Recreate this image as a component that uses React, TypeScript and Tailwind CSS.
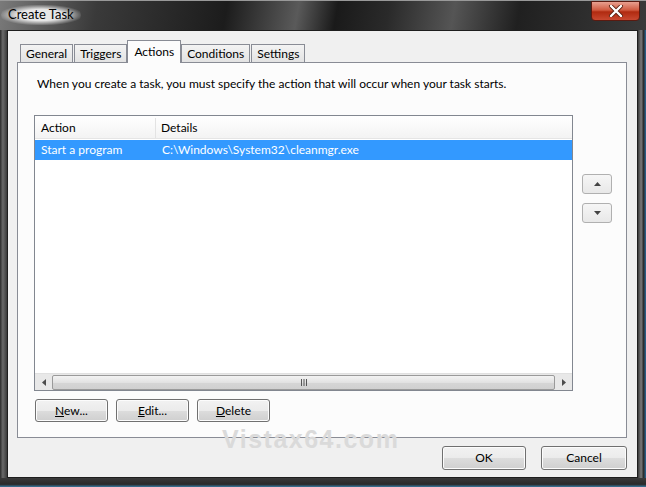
import React from "react";

const Btn = ({ children, className = "" }: { children: React.ReactNode; className?: string }) => (
  <div
    className={`flex items-center justify-center rounded-[3px] border border-[#707070] bg-[linear-gradient(#f2f2f2_0%,#ebebeb_50%,#dddddd_50%,#cfcfcf_100%)] text-[12px] text-black shadow-[inset_0_0_0_1px_#fcfcfc] ${className}`}
  >
    {children}
  </div>
);

export default function App() {
  return (
    <div
      className="w-[646px] h-[487px] overflow-hidden flex flex-col bg-[#1a1a1a]"
      style={{ fontFamily: 'Lato, "Noto Sans", sans-serif' }}
    >
      {/* title bar */}
      <div className="relative h-[30px] shrink-0 bg-[linear-gradient(100deg,#7a7a7a_0%,#3a3a3a_15%,#1c1c1c_35%,#5a5a5a_46%,#1a1a1a_52%,#2a2a2a_60%,#555_70%,#202020_80%,#3a3a3a_100%)] border-t border-[#999]">
        <div className="absolute left-[1px] top-[4px] px-[7px] h-[20px] flex items-center rounded-[10px] bg-[radial-gradient(ellipse_at_center,rgba(255,255,255,0.85)_40%,rgba(255,255,255,0)_75%)] text-[13px] text-black">
          Create Task
        </div>
        <div className="absolute left-[591px] top-[0px] w-[49px] h-[20px] rounded-b-[4px] border border-[#5a1a10] bg-[linear-gradient(#e8a090_0%,#d05a40_45%,#b02a10_55%,#c84830_100%)] flex items-center justify-center">
          <svg width="16" height="12" viewBox="0 0 16 12">
            <path d="M3 1 L13 11 M13 1 L3 11" stroke="#5a2010" strokeWidth="4" strokeLinecap="round" />
            <path d="M3 1 L13 11 M13 1 L3 11" stroke="#ffffff" strokeWidth="2.4" strokeLinecap="round" />
          </svg>
        </div>
      </div>

      <div className="flex flex-1 min-h-0">
        <div className="w-[7px] shrink-0 bg-[linear-gradient(90deg,#2a2a2a,#6a6a6a_40%,#3a3a3a)]" />
        {/* client */}
        <div className="flex-1 flex flex-col bg-[#f0f0f0] border border-[#1e1e1e] px-[9px] pt-[8px]">
          {/* tabs */}
          <div className="flex items-end h-[23px] pl-[3px] text-[12px] text-black">
            <div className="h-[18px] px-[5px] flex items-center border border-[#898c95] border-b-0 bg-[linear-gradient(#f3f3f3,#e3e3e3)]">General</div>
            <div className="h-[18px] px-[5px] ml-[1px] flex items-center border border-[#898c95] border-b-0 bg-[linear-gradient(#f3f3f3,#e3e3e3)]">Triggers</div>
            <div className="relative z-10 h-[23px] px-[6px] mb-[-1px] flex items-start pt-[2px] border border-[#898c95] border-b-0 bg-[#fcfcfc]">Actions</div>
            <div className="h-[18px] px-[5px] flex items-center border border-[#898c95] border-b-0 bg-[linear-gradient(#f3f3f3,#e3e3e3)]">Conditions</div>
            <div className="h-[18px] px-[5px] ml-[1px] flex items-center border border-[#898c95] border-b-0 bg-[linear-gradient(#f3f3f3,#e3e3e3)]">Settings</div>
          </div>
          {/* tab panel */}
          <div className="relative w-[610px] h-[376px] border border-[#898c95] bg-[#fcfcfc] flex flex-col pl-[16px]">
            <div className="mt-[13px] pl-[3px] text-[12px] text-black leading-[16px]">
              When you create a task, you must specify the action that will occur when your task starts.
            </div>
            <div className="flex mt-[23px]">
              {/* list */}
              <div className="w-[539px] h-[276px] border border-[#828790] bg-white flex flex-col text-[12px]">
                <div className="flex h-[23px] pt-[2px] border-b border-[#e5e5e5] bg-[linear-gradient(#ffffff,#f3f3f3)] items-center">
                  <div className="w-[121px] h-full pl-[6px] flex items-center border-r border-[#e3e3e3] text-black">Action</div>
                  <div className="pl-[5px] text-black">Details</div>
                </div>
                <div className="mt-[1px] h-[20px] flex items-center bg-[#3399ff] text-white">
                  <div className="w-[121px] pl-[6px]">Start a program</div>
                  <div className="pl-[6px]">C:\Windows\System32\cleanmgr.exe</div>
                </div>
                <div className="flex-1" />
                <div className="h-[17px] flex items-center bg-[#e8e8e8] border-t border-[#e0e0e0]">
                  <div className="w-[17px] flex items-center justify-center">
                    <svg width="4" height="7" viewBox="0 0 4 7"><path d="M4 0 L0 3.5 L4 7 Z" fill="#4d4d4d" /></svg>
                  </div>
                  <div className="flex-1 h-[15px] rounded-[2px] border border-[#9a9a9a] bg-[linear-gradient(#f3f3f3,#e2e2e2_50%,#d6d6d6_50%,#d0d0d0)] flex items-center justify-center">
                    <svg width="8" height="7" viewBox="0 0 8 7"><path d="M1.5 0 V7 M4 0 V7 M6.5 0 V7" stroke="#555" strokeWidth="1" /></svg>
                  </div>
                  <div className="w-[17px] flex items-center justify-center">
                    <svg width="4" height="7" viewBox="0 0 4 7"><path d="M0 0 L4 3.5 L0 7 Z" fill="#4d4d4d" /></svg>
                  </div>
                </div>
              </div>
              {/* up/down */}
              <div className="ml-[9px] mt-[59px] flex flex-col gap-[9px]">
                <div className="w-[30px] h-[20px] rounded-[3px] border border-[#b0b0b0] bg-[linear-gradient(#f6f6f6,#e8e8e8)] flex items-center justify-center">
                  <svg width="7" height="4" viewBox="0 0 7 4"><path d="M0 4 L3.5 0 L7 4 Z" fill="#444" /></svg>
                </div>
                <div className="w-[30px] h-[20px] rounded-[3px] border border-[#b0b0b0] bg-[linear-gradient(#f6f6f6,#e8e8e8)] flex items-center justify-center">
                  <svg width="7" height="4" viewBox="0 0 7 4"><path d="M0 0 L3.5 4 L7 0 Z" fill="#444" /></svg>
                </div>
              </div>
            </div>
            <div className="flex gap-[8px] mt-[8px] ml-[1px]">
              <Btn className="w-[73px] h-[23px]"><span><span className="underline">N</span>ew...</span></Btn>
              <Btn className="w-[73px] h-[23px]"><span><span className="underline">E</span>dit...</span></Btn>
              <Btn className="w-[73px] h-[23px]"><span><span className="underline">D</span>elete</span></Btn>
            </div>
            <div
              className="absolute left-[204px] top-[362px] text-[25px] leading-[28px] font-bold text-[#dadada] tracking-[1.5px]"
              style={{ fontFamily: '"Liberation Sans", Arial, sans-serif' }}
            >
              Vistax64.com
            </div>
          </div>
          {/* OK / Cancel */}
          <div className="flex justify-end gap-[15px] mt-[8px] pr-[1px]">
            <Btn className="w-[84px] h-[24px] border-[#3c7fb1] shadow-[inset_0_0_0_1px_#48d8fb]">OK</Btn>
            <Btn className="w-[86px] h-[24px]">Cancel</Btn>
          </div>
        </div>
        <div className="w-[8px] shrink-0 bg-[linear-gradient(90deg,#3a3a3a,#7a7a7a_40%,#2a2a2a_70%,#2a6a9a)]" />
      </div>
      <div className="h-[9px] shrink-0 bg-[linear-gradient(#3a3a3a,#2a2a2a_70%,#3a7aa0)]" />
    </div>
  );
}
